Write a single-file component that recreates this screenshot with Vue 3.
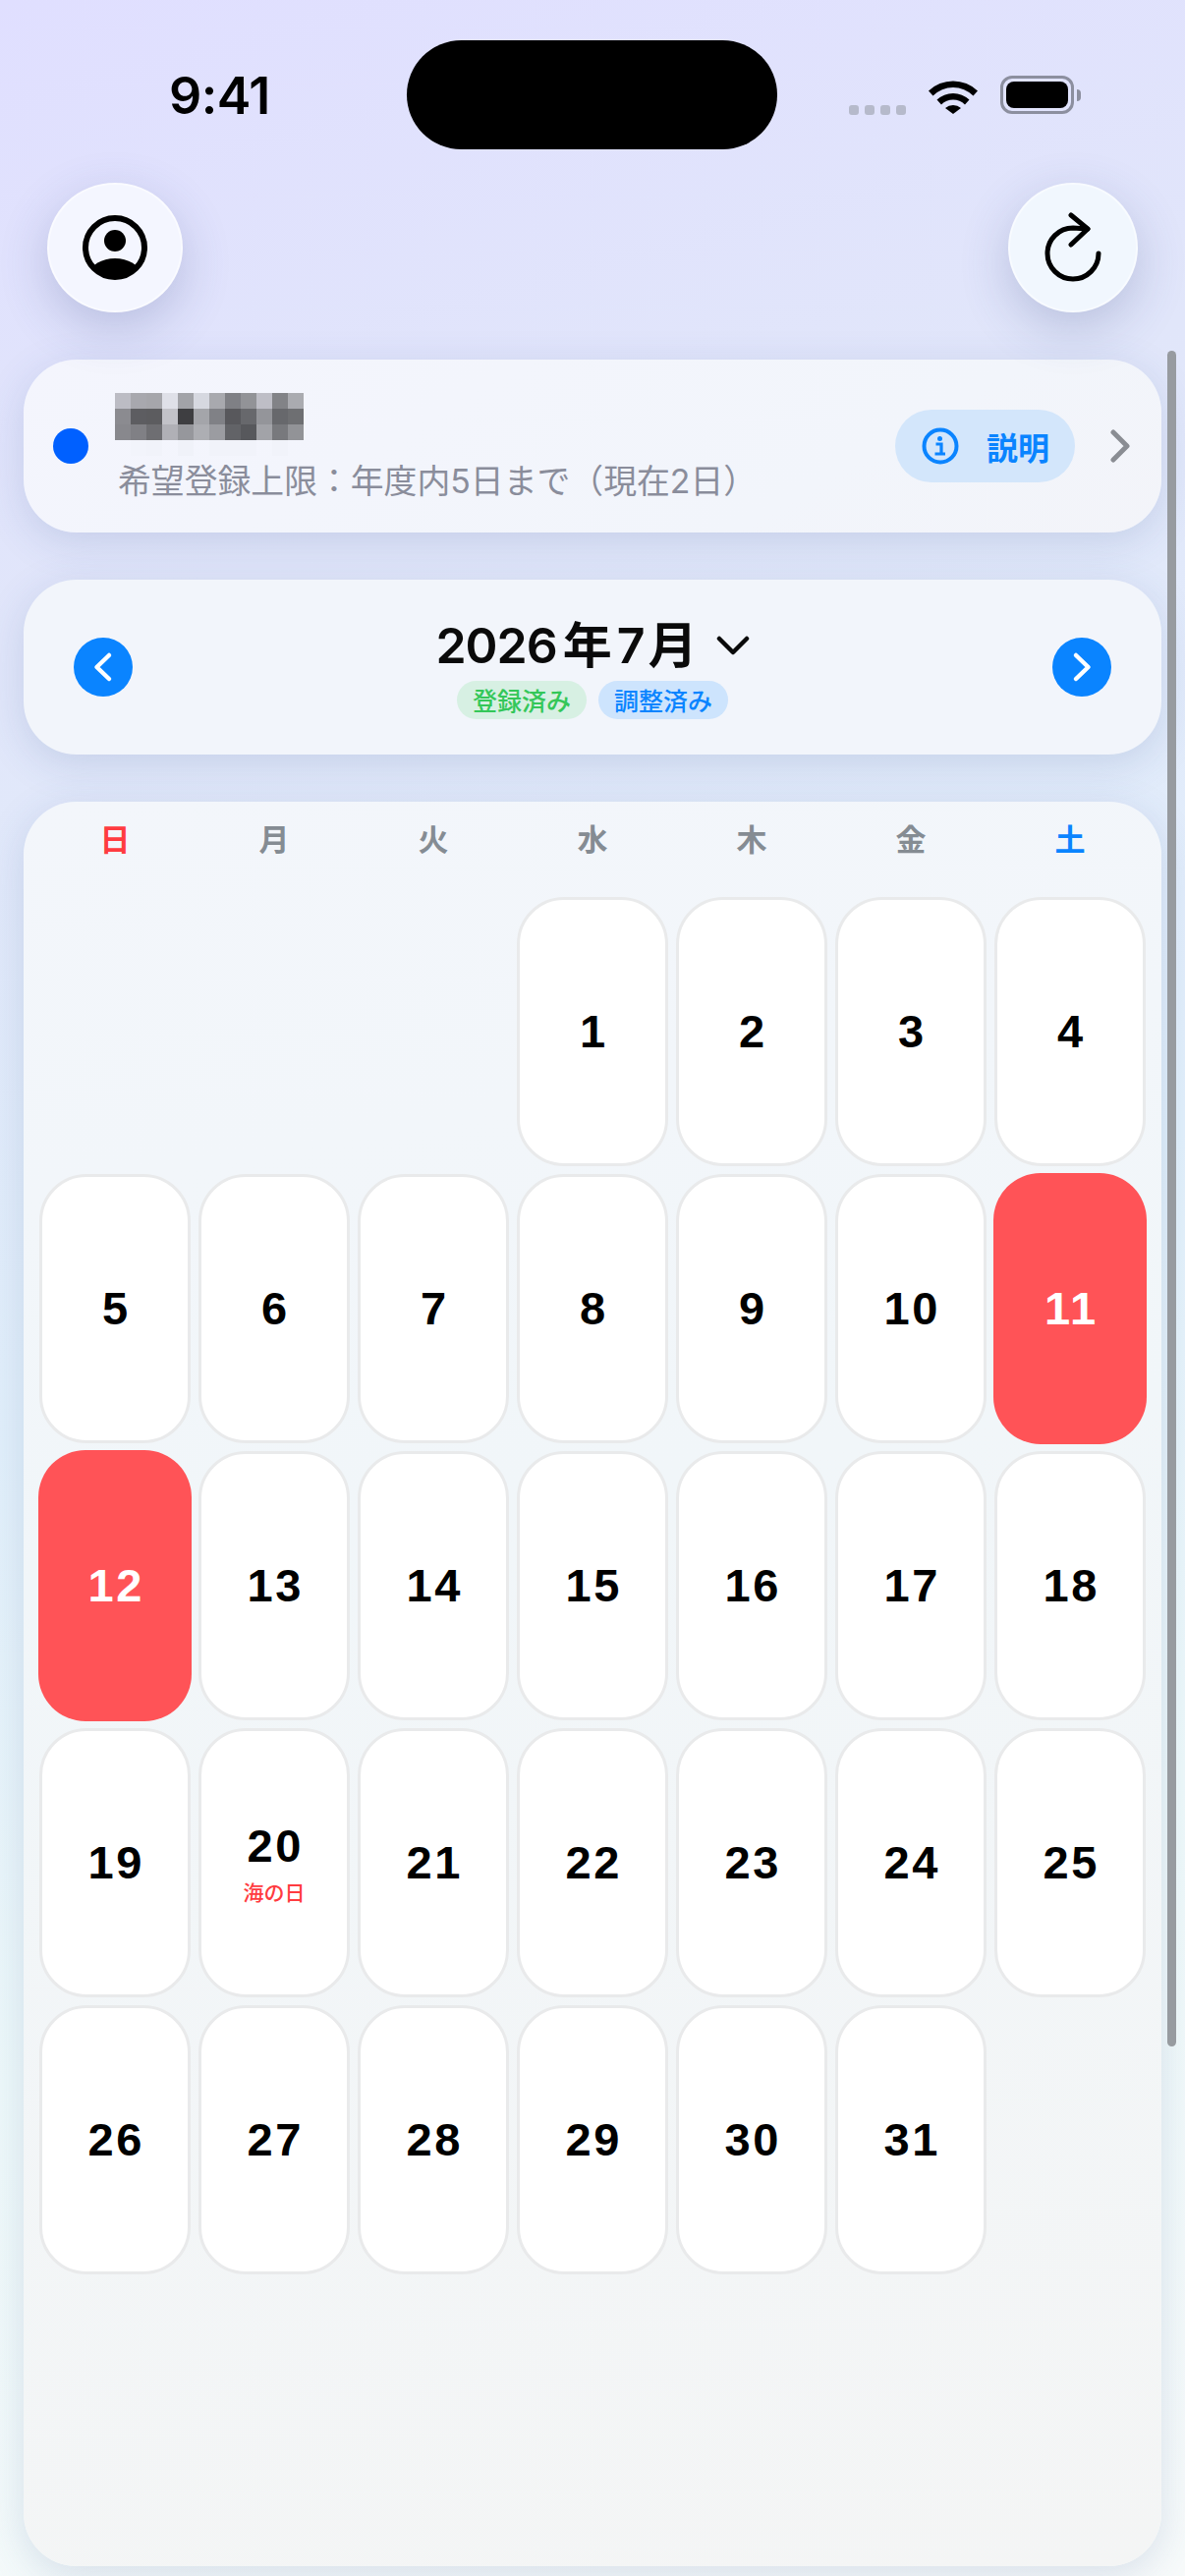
<template>
  <div class="page">
    <div class="status-bar">
      <span class="time">9:41</span>
      <div class="island"></div>
      <div class="status-icons">
        <div class="signal"><i v-for="n in 4" :key="n"></i></div>
        <svg class="wifi" width="52" height="38" viewBox="0 0 52 38">
          <path d="M1 14.5 A36 36 0 0 1 51 14.5 L46.5 19.5 A29 29 0 0 0 5.500 19.500 Z" fill="#000" />
          <path d="M9.500 23.500 A24 24 0 0 1 42.500 23.500 L38 28.500 A17 17 0 0 0 14 28.500 Z" fill="#000" />
          <path d="M18 32 A12 12 0 0 1 34 32 L26 38 Z" fill="#000" />
        </svg>
        <div class="battery"><div class="battery-fill"></div></div>
        <div class="battery-cap"></div>
      </div>
    </div>

    <div class="top-actions">
      <button class="round-btn round-btn-wide">
        <svg width="66" height="66" viewBox="0 0 66 66">
          <defs>
            <clipPath id="faceClip"><circle cx="33" cy="33" r="30" /></clipPath>
          </defs>
          <circle cx="33" cy="33" r="30" fill="none" stroke="#000" stroke-width="6" />
          <circle cx="33" cy="26" r="11" fill="#000" />
          <ellipse cx="33" cy="59" rx="25" ry="15" fill="#000" clip-path="url(#faceClip)" />
        </svg>
      </button>
      <button class="round-btn">
        <svg width="60" height="72" viewBox="0 0 60 72" fill="none" stroke="#000" stroke-width="5" stroke-linecap="round" stroke-linejoin="round">
          <path d="M56 42 A26 26 0 1 1 30 16 L45 17" />
          <path d="M28 3 L45 17 L28 33" />
        </svg>
      </button>
    </div>

    <div class="card info-card">
      <div class="dot"></div>
      <div class="info-text">
        <div class="mosaic">
          <i
            v-for="(shade, idx) in mosaic"
            :key="idx"
            :style="{ background: shade }"
          ></i>
        </div>
        <div class="limit">希望登録上限：年度内5日まで（現在2日）</div>
      </div>
      <div class="help-pill">
        <svg width="38" height="38" viewBox="0 0 38 38">
          <circle cx="19" cy="19" r="16.500" fill="none" stroke="#0a84ff" stroke-width="4" />
          <circle cx="18.500" cy="11.500" r="2.500" fill="#0a84ff" />
          <path d="M14.500 17 H20 V26 M13.500 27 H24" fill="none" stroke="#0a84ff" stroke-width="3.200" />
        </svg>
        <span>説明</span>
      </div>
      <svg class="info-chevron" width="20" height="34" viewBox="0 0 20 34" fill="none" stroke="#8a8d93" stroke-width="5" stroke-linecap="round" stroke-linejoin="round">
        <path d="M3 3 L17 17 L3 31" />
      </svg>
    </div>

    <div class="card month-card">
      <button class="nav-btn">
        <svg width="22" height="34" viewBox="0 0 22 34" fill="none" stroke="#fff" stroke-width="4.500" stroke-linecap="round" stroke-linejoin="round">
          <path d="M17 5 L4.500 17 L17 29" />
        </svg>
      </button>
      <div class="month-center">
        <div class="month-title">
          <span class="month-label">2026<span class="kanji">年</span>7<span class="kanji-end">月</span></span>
          <svg width="34" height="20" viewBox="0 0 34 20" fill="none" stroke="#0a0a0a" stroke-width="4.500" stroke-linecap="round" stroke-linejoin="round">
            <path d="M3 3 L17 17 L31 3" />
          </svg>
        </div>
        <div class="legend">
          <span class="tag tag-green">登録済み</span>
          <span class="tag tag-blue">調整済み</span>
        </div>
      </div>
      <button class="nav-btn">
        <svg width="22" height="34" viewBox="0 0 22 34" fill="none" stroke="#fff" stroke-width="4.500" stroke-linecap="round" stroke-linejoin="round">
          <path d="M5 5 L17.500 17 L5 29" />
        </svg>
      </button>
    </div>

    <div class="card calendar">
      <div class="weekdays">
        <span
          v-for="(w, i) in weekdays"
          :key="w"
          :class="{ sun: i === 0, sat: i === 6 }"
        >{{ w }}</span>
      </div>
      <div class="grid">
        <div v-for="n in 3" :key="'blank' + n"></div>
        <div
          v-for="d in 31"
          :key="d"
          class="day"
          :class="{ 'is-off': d === 11 || d === 12 }"
        >
          <div class="day-num">{{ d }}</div>
          <div v-if="d === 20" class="holiday">海の日</div>
        </div>
      </div>
    </div>

    <div class="scrollbar"></div>
  </div>
</template>

<script setup>
const weekdays = ['日', '月', '火', '水', '木', '金', '土'];

const mosaic = [
  '#bcbcc4', '#a8a8ae', '#a6a6ab', '#dfe0e8', '#a2a3a8', '#d6d8e0', '#a8a9ae', '#7f8085', '#929397', '#bebec6', '#828387', '#aaabb0',
  '#8b8b90', '#5d5d61', '#5c5c5f', '#c2c2c8', '#3e3e41', '#a4a5aa', '#808186', '#58585c', '#67686c', '#94959a', '#67686c', '#6e6f72',
  '#88888d', '#808085', '#6e6e72', '#b0b0b6', '#96979c', '#adaeb3', '#9b9ca1', '#626367', '#57585c', '#a2a3a8', '#78797d', '#929397',
  'transparent', '#f2f4fb', '#f1f3fa', 'transparent', '#f0f2f9', 'transparent', '#f1f3fa', '#f1f3fa', '#f1f3fa', 'transparent', '#f1f3fa', 'transparent',
];
</script>

<style scoped>
.page { position: relative; width: 1206px; height: 2622px; overflow: hidden; font-family: Inter, "Noto Sans CJK JP", sans-serif; color: #000; background: linear-gradient(165deg, #e0dfff 0%, #e1e6fa 22%, #e2f0fb 50%, #eef9fa 72%, #f8fbfb 100%); }

.status-bar { display: flex; align-items: center; height: 186px; padding: 41px 0 34px 172px; box-sizing: border-box; }
.time { width: 242px; padding-top: 2px; font-family: Inter, sans-serif; font-size: 52px; font-weight: 600; letter-spacing: -0.5px; line-height: 109px; }
.island { width: 377px; height: 111px; border-radius: 56px; background: #000; }
.status-icons { display: flex; align-items: center; margin-left: 73px; height: 111px; }
.signal { display: flex; gap: 6px; margin: 30px 22px 0 0; }
.signal i { width: 10px; height: 10px; border-radius: 3px; background: #b6bacb; }
.wifi { margin-right: 22px; }
.battery { box-sizing: border-box; width: 75px; height: 39px; padding: 3px; border: 3px solid #8c8f9f; border-radius: 12px; }
.battery-fill { height: 100%; border-radius: 8px; background: #000; }
.battery-cap { width: 4px; height: 12px; margin-left: 3px; border-radius: 0 6px 6px 0; background: #8c8f9f; }

.top-actions { display: flex; justify-content: space-between; align-items: center; padding: 0 48px; }
.round-btn { display: flex; align-items: center; justify-content: center; width: 132px; height: 132px; padding: 0; border: 2px solid rgba(255, 255, 255, 0.5); border-radius: 50%; box-sizing: border-box; background: #f1f7fe; box-shadow: 0 16px 50px rgba(60, 75, 135, 0.24); }
.round-btn-wide { width: 138px; background: #f4f6ff; }

.card { box-sizing: border-box; width: 1158px; margin: 48px 0 0 24px; border-radius: 54px; background: #f2f5fc; box-shadow: 0 10px 40px rgba(60, 90, 150, 0.17); }

.info-card { display: flex; align-items: center; height: 176px; padding: 0 32px 0 30px; background: linear-gradient(150deg, #f4f5fd 0%, #f2f5fb 70%, #f3f4f9 100%); }
.dot { flex: none; width: 36px; height: 36px; border-radius: 50%; background: #0060ff; }
.info-text { flex: 1; margin: 3px 0 0 27px; }
.mosaic { display: grid; grid-template-columns: repeat(12, 16px); grid-auto-rows: 16px; }
.limit { margin: 5px 0 0 3px; font-size: 33.85px; line-height: 42px; color: #8a8d9b; }
.help-pill { flex: none; display: flex; align-items: center; gap: 28px; width: 183px; height: 74px; padding-left: 27px; box-sizing: border-box; border-radius: 37px; background: #d3e6fb; color: #0a84ff; font-size: 32px; font-weight: 700; }
.info-chevron { flex: none; margin-left: 36px; }

.month-card { display: flex; align-items: center; justify-content: space-between; height: 178px; padding: 0 51px; background: #f2f5fb; }
.nav-btn { display: flex; align-items: center; justify-content: center; width: 60px; height: 60px; padding: 0; border: 0; border-radius: 50%; background: #0a84ff; }
.month-center { display: flex; flex-direction: column; align-items: center; }
.month-title { display: flex; align-items: center; gap: 20px; height: 60px; }
.month-label { font-size: 50px; font-weight: 600; letter-spacing: -1px; color: #0a0a0a; line-height: 60px; }
.kanji { margin: 0 6px; }
.kanji-end { margin-left: 4px; }
.legend { display: flex; gap: 12px; margin-top: 6px; }
.tag { display: flex; align-items: center; justify-content: center; width: 132px; height: 39px; border-radius: 20px; font-size: 25px; font-weight: 500; }
.tag-green { background: #d7f0e3; color: #34c759; }
.tag-blue { background: #cde4fd; color: #0a84ff; }

.calendar { height: 1796px; padding: 0 16px; background: linear-gradient(170deg, #f3f6fb 0%, #f1f6f9 40%, #f4f5f5 100%); }
.weekdays { display: grid; grid-template-columns: repeat(7, 154px); column-gap: 8px; height: 97px; padding-top: 19px; box-sizing: border-box; font-size: 31px; font-weight: 700; line-height: 40px; text-align: center; color: #858c93; }
.sun { color: #ff3b40; }
.sat { color: #0a84ff; }
.grid { display: grid; grid-template-columns: repeat(7, 154px); grid-auto-rows: 274px; gap: 8px; }
.day { display: flex; flex-direction: column; align-items: center; justify-content: center; box-sizing: border-box; border: 3px solid #e9eaeb; border-radius: 48px; background: #fff; }
.day-num { padding-left: 2.5px; font-family: "Liberation Sans", Arial, sans-serif; font-size: 47px; font-weight: 700; letter-spacing: 2.5px; line-height: 54px; }
.holiday { margin-top: 8px; font-size: 21px; font-weight: 500; line-height: 26px; color: #ff3b40; }
.day.is-off { margin: -1px; border: 0; background: #ff5357; color: #fff; }

.scrollbar { position: absolute; top: 357px; left: 1188px; width: 9px; height: 1726px; border-radius: 5px; background: #979ba0; }
</style>

<style>
body { margin: 0; }
</style>
